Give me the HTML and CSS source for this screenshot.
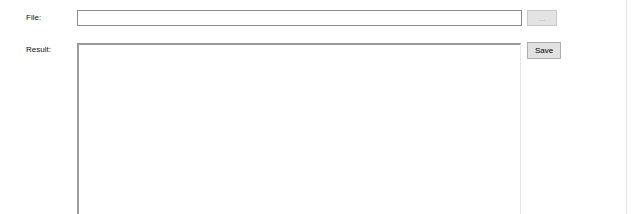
FILE: index.html
```html
<!DOCTYPE html>
<html lang="en">
<head>
    <meta charset="UTF-8">
    <title>File Viewer</title>
    <link rel="stylesheet" href="styles.css">
</head>
<body>
    <div class="panel">
        <div class="row row-file">
            <label class="label" for="file-path">File:</label>
            <input type="text" class="file-input" id="file-path">
            <button class="btn btn-browse" disabled>...</button>
        </div>
        <div class="row row-result">
            <label class="label" for="result">Result:</label>
            <textarea class="result" id="result"></textarea>
            <button class="btn btn-save">Save</button>
        </div>
    </div>
</body>
</html>
```

FILE: styles.css
```css
html, body {
    margin: 0;
    padding: 0;
    height: 100%;
    overflow: hidden;
    background-color: #fff;
    font-family: 'Liberation Sans', Arial, sans-serif;
    font-size: 8px;
    color: #111;
}
.panel {
    width: 627px;
    height: 100%;
    border-right: 1px solid #e4e4e4;
    box-sizing: border-box;
    padding: 10px 0 0 26px;
}
.row {
    display: flex;
    align-items: flex-start;
}
.row-result {
    margin-top: 16px;
}
.label {
    width: 51px;
    flex-shrink: 0;
    line-height: 10px;
    padding-top: 3px;
}
.row-result .label {
    padding-top: 3px;
}
.file-input {
    width: 445px;
    height: 16px;
    box-sizing: border-box;
    margin: 0;
    border: 1px solid #8a8a8a;
    padding: 0 2px;
    font: inherit;
    outline: none;
}
.result {
    width: 444px;
    height: 171px;
    box-sizing: border-box;
    margin: 1px 0 0 0;
    border: 1px solid #e6e6e6;
    border-top: 2px solid #9a9a9a;
    border-left: 2px solid #9a9a9a;
    border-bottom: none;
    resize: none;
    font: inherit;
    outline: none;
}
.btn {
    height: 16px;
    padding: 0;
    font: inherit;
    box-sizing: border-box;
}
.btn-browse {
    width: 30px;
    margin-left: 5px;
    background-color: #e3e3e3;
    border: 1px solid #c8c8c8;
    color: #a8a8a8;
}
.btn-save {
    width: 34px;
    height: 17px;
    margin-left: 6px;
    background-color: #e1e1e1;
    border: 1px solid #adadad;
    color: #000;
}
```
